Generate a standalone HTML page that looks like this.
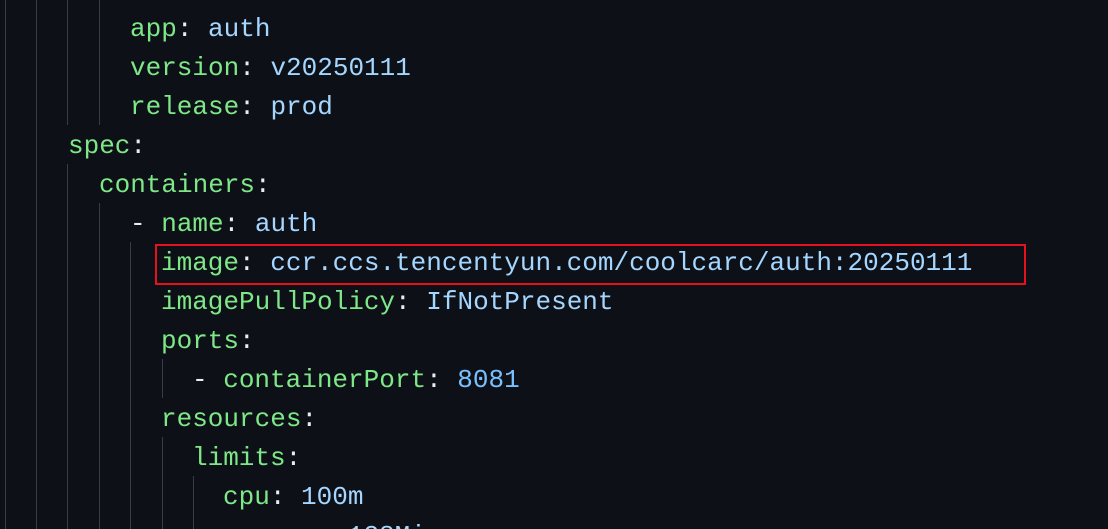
<!DOCTYPE html>
<html><head><style>
html,body{margin:0;padding:0;background:#0d1117;width:1108px;height:529px;overflow:hidden}
#w{position:relative;width:1108px;height:529px;overflow:hidden}
.l{position:absolute;left:0;height:39px;line-height:39px;font-family:"Liberation Mono",monospace;font-size:26px;white-space:pre;color:#e6edf3}
.k{color:#7ee787}.v{color:#a5d6ff}.n{color:#79c0ff}
.g{position:absolute;width:1px;background:#373d45}
.box{position:absolute;left:155px;top:244px;width:867px;height:37px;border:2px solid #e5111d}
</style></head><body><div id="w">
<div class="g" style="left:5px;top:0;height:529px"></div>
<div class="g" style="left:36px;top:0;height:529px"></div>
<div class="g" style="left:67px;top:0;height:125px"></div>
<div class="g" style="left:67px;top:164px;height:365px"></div>
<div class="g" style="left:99px;top:0;height:125px"></div>
<div class="g" style="left:99px;top:203px;height:326px"></div>
<div class="g" style="left:130px;top:242px;height:287px"></div>
<div class="g" style="left:162px;top:359px;height:39px"></div>
<div class="g" style="left:162px;top:437px;height:92px"></div>
<div class="g" style="left:193px;top:476px;height:53px"></div>
<div class="l" style="top:10px;left:130px"><span class="k">app</span>: <span class="v">auth</span></div>
<div class="l" style="top:49px;left:130px"><span class="k">version</span>: <span class="v">v20250111</span></div>
<div class="l" style="top:88px;left:130px"><span class="k">release</span>: <span class="v">prod</span></div>
<div class="l" style="top:127px;left:68px"><span class="k">spec</span>:</div>
<div class="l" style="top:166px;left:99px"><span class="k">containers</span>:</div>
<div class="l" style="top:205px;left:130px">- <span class="k">name</span>: <span class="v">auth</span></div>
<div class="l" style="top:244px;left:161px"><span class="k">image</span>: <span class="v">ccr.ccs.tencentyun.com/coolcarc/auth:20250111</span></div>
<div class="l" style="top:283px;left:161px"><span class="k">imagePullPolicy</span>: <span class="v">IfNotPresent</span></div>
<div class="l" style="top:322px;left:161px"><span class="k">ports</span>:</div>
<div class="l" style="top:361px;left:192px">- <span class="k">containerPort</span>: <span class="n">8081</span></div>
<div class="l" style="top:400px;left:161px"><span class="k">resources</span>:</div>
<div class="l" style="top:439px;left:192px"><span class="k">limits</span>:</div>
<div class="l" style="top:478px;left:223px"><span class="k">cpu</span>: <span class="v">100m</span></div>
<div class="l" style="top:517px;left:223px;height:12px;overflow:hidden"><span class="k">memory</span>: <span class="v">128Mi</span></div>
<div class="box"></div>
</div></body></html>
